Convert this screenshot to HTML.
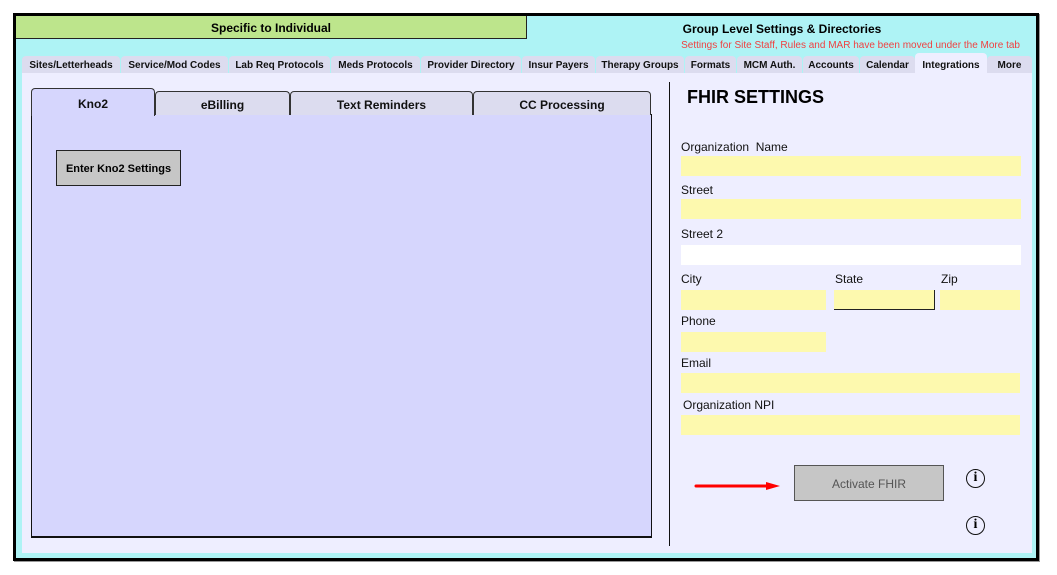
<!DOCTYPE html>
<html><head><style>
*{box-sizing:border-box;margin:0;padding:0}
body{width:1057px;height:575px;background:#fff;font-family:"Liberation Sans",Arial,sans-serif;position:relative;overflow:hidden}
.a{position:absolute}
.tab{position:absolute;top:56px;height:17px;background:#dcdcef;border-radius:4px 4px 0 0;font-size:10px;font-weight:bold;text-align:center;line-height:19px;color:#111}
.it{position:absolute;background:#dcdcef;border:1px solid #333;border-bottom:none;border-radius:4px 4px 0 0;font-size:12px;font-weight:bold;text-align:center;color:#111}
.lbl{position:absolute;font-size:12px;color:#111}
.f{position:absolute;background:#fdf9ae;height:20px}
.info{position:absolute;width:19px;height:19px;border:1.5px solid #111;border-radius:50%;font-family:"Liberation Serif",serif;font-weight:bold;font-size:14px;text-align:center;line-height:16px}
</style></head><body>
<div class="a" style="left:13px;top:13px;width:1026px;height:548px;background:#000;box-shadow:1px 1px 0 #999"></div>
<div class="a" style="left:16px;top:16px;width:1020px;height:542px;background:#aef3f5"></div>
<div class="a" style="left:16px;top:16px;width:511px;height:23px;background:#bde58c;border:1px solid #222;border-top:none;border-left:none;font-size:12px;font-weight:bold;text-align:center;line-height:25px">Specific to Individual</div>
<div class="a" style="left:527px;top:22px;width:510px;font-size:12px;font-weight:bold;text-align:center">Group Level Settings &amp; Directories</div>
<div class="a" style="right:37px;top:40px;font-size:10px;color:#f04040">Settings for Site Staff, Rules and MAR have been moved under the More tab</div>
<div class="a" style="left:22px;top:73px;width:1010px;height:480px;background:#eeeeff"></div>
<div class="tab" style="left:22px;width:98px">Sites/Letterheads</div>
<div class="tab" style="left:121px;width:107px">Service/Mod Codes</div>
<div class="tab" style="left:229px;width:101px">Lab Req Protocols</div>
<div class="tab" style="left:331px;width:89px">Meds Protocols</div>
<div class="tab" style="left:421px;width:100px">Provider Directory</div>
<div class="tab" style="left:522px;width:73px">Insur Payers</div>
<div class="tab" style="left:596px;width:88px">Therapy Groups</div>
<div class="tab" style="left:685px;width:51px">Formats</div>
<div class="tab" style="left:737px;width:65px">MCM Auth.</div>
<div class="tab" style="left:803px;width:56px">Accounts</div>
<div class="tab" style="left:860px;width:55px">Calendar</div>
<div class="tab" style="left:915px;width:72px;background:#eeeeff;top:53px;height:20px;line-height:25px">Integrations</div>
<div class="tab" style="left:987px;width:45px">More</div>
<div class="a" style="left:31px;top:114px;width:621px;height:424px;background:#d6d6fd;border:1px solid #111;border-bottom:2px solid #111"></div>
<div class="it" style="left:155px;top:91px;width:135px;height:24px;line-height:26px">eBilling</div>
<div class="it" style="left:290px;top:91px;width:183px;height:24px;line-height:26px">Text Reminders</div>
<div class="it" style="left:473px;top:91px;width:178px;height:24px;line-height:26px">CC Processing</div>
<div class="it" style="left:31px;top:88px;width:124px;height:28px;line-height:30px;background:#d6d6fd;border-bottom:none;z-index:2">Kno2</div>
<div class="a" style="left:56px;top:150px;width:125px;height:36px;background:#c6c6c6;border:1px solid #222;font-size:11px;font-weight:bold;text-align:center;line-height:36px">Enter Kno2 Settings</div>
<div class="a" style="left:669px;top:82px;width:1px;height:464px;background:#111"></div>
<div class="a" style="left:687px;top:87px;font-size:18px;font-weight:bold">FHIR SETTINGS</div>
<div class="lbl" style="left:681px;top:140px">Organization&nbsp; Name</div>
<div class="f" style="left:681px;top:156px;width:340px"></div>
<div class="lbl" style="left:681px;top:183px">Street</div>
<div class="f" style="left:681px;top:199px;width:340px"></div>
<div class="lbl" style="left:681px;top:227px">Street 2</div>
<div class="f" style="left:681px;top:245px;width:340px;background:#fff"></div>
<div class="lbl" style="left:681px;top:272px">City</div>
<div class="lbl" style="left:835px;top:272px">State</div>
<div class="lbl" style="left:941px;top:272px">Zip</div>
<div class="f" style="left:681px;top:290px;width:145px"></div>
<div class="f" style="left:834px;top:290px;width:101px;border-right:1px solid #222;border-bottom:1px solid #222"></div>
<div class="f" style="left:940px;top:290px;width:80px"></div>
<div class="lbl" style="left:681px;top:314px">Phone</div>
<div class="f" style="left:681px;top:332px;width:145px"></div>
<div class="lbl" style="left:681px;top:356px">Email</div>
<div class="f" style="left:681px;top:373px;width:339px"></div>
<div class="lbl" style="left:683px;top:398px">Organization NPI</div>
<div class="f" style="left:681px;top:415px;width:339px"></div>
<svg class="a" style="left:694px;top:480px" width="88" height="12"><line x1="2" y1="6" x2="76" y2="6" stroke="#f00" stroke-width="3" stroke-linecap="round"/><polygon points="72,2 86,6 72,10" fill="#f00"/></svg>
<div class="a" style="left:794px;top:465px;width:150px;height:36px;background:#c6c6c6;border:1px solid #555;font-size:12px;color:#555;text-align:center;line-height:36px">Activate FHIR</div>
<div class="info" style="left:966px;top:469px">i</div>
<div class="info" style="left:966px;top:516px">i</div>
</body></html>
